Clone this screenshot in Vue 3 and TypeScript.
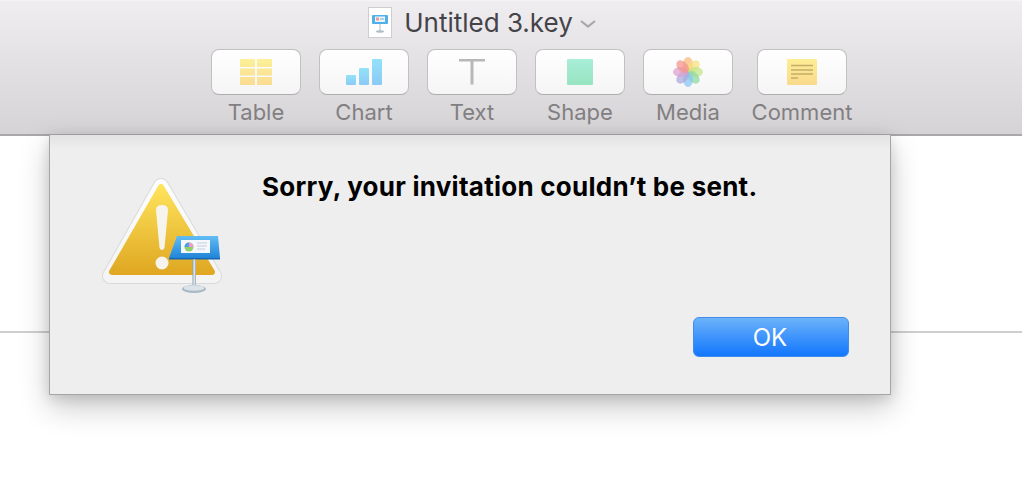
<script setup lang="ts">
const tools: string[] = ['Table', 'Chart', 'Text', 'Shape', 'Media', 'Comment']
const petals: { a: number; c: string }[] = [
  { a: 0, c: '#f9b87c' },
  { a: 45, c: '#f8e07a' },
  { a: 90, c: '#c2e585' },
  { a: 135, c: '#8cd9a0' },
  { a: 180, c: '#88c6f2' },
  { a: 225, c: '#aca7de' },
  { a: 270, c: '#dd9fd0' },
  { a: 315, c: '#f4918a' },
]
</script>

<template>
  <div class="window">
    <header class="toolbar">
      <div class="title-row">
        <span class="doc-thumb">
          <svg width="20" height="24" viewBox="0 0 20 24">
            <rect x="2" y="4" width="16" height="9" rx="1" fill="#4fb0ea" />
            <rect x="5" y="5.500" width="10" height="5.500" fill="#eef4fb" />
            <rect x="6" y="6.500" width="3" height="3" fill="#ef9a8c" />
            <rect x="10" y="7" width="4" height="2" fill="#b9cfe6" />
            <rect x="9.500" y="13" width="1" height="7" fill="#aebcc6" />
            <ellipse cx="10" cy="20.500" rx="4" ry="1.200" fill="#aebcc6" />
          </svg>
        </span>
        <span class="doc-name">Untitled 3.key</span>
        <svg class="chevron" width="16" height="8" viewBox="0 0 16 8">
          <path d="M1 1 L8 6.500 L15 1" fill="none" stroke="#a9a7a9" stroke-width="2.200" />
        </svg>
      </div>
      <div class="tools">
        <div v-for="tool in tools" :key="tool" class="tool">
          <div class="tool-btn">
            <svg v-if="tool === 'Table'" width="32" height="26" viewBox="0 0 32 26">
              <defs>
                <linearGradient id="tb" x1="0" y1="0" x2="0" y2="1">
                  <stop offset="0" stop-color="#fdf098" />
                  <stop offset="1" stop-color="#f9dc92" />
                </linearGradient>
              </defs>
              <path d="M0 0H15V8H0ZM17 0H32V8H17ZM0 9.500H15V16.500H0ZM17 9.500H32V16.500H17ZM0 18H15V26H0ZM17 18H32V26H17Z" fill="url(#tb)" />
            </svg>
            <svg v-else-if="tool === 'Chart'" width="36" height="26" viewBox="0 0 36 26">
              <defs>
                <linearGradient id="cb" x1="0" y1="0" x2="0" y2="1">
                  <stop offset="0" stop-color="#93e2f8" />
                  <stop offset="1" stop-color="#8bc9f6" />
                </linearGradient>
              </defs>
              <rect x="0" y="16" width="10" height="10" rx="1" fill="url(#cb)" />
              <rect x="13" y="9" width="10" height="17" rx="1" fill="url(#cb)" />
              <rect x="26" y="0" width="10" height="26" rx="1" fill="url(#cb)" />
            </svg>
            <svg v-else-if="tool === 'Text'" width="26" height="26" viewBox="0 0 26 26">
              <path d="M0 0H26V2.500H14.500V25.500H11.500V2.500H0Z" fill="#b9b8b9" />
            </svg>
            <span v-else-if="tool === 'Shape'" class="shape-square"></span>
            <svg v-else-if="tool === 'Media'" width="30" height="30" viewBox="-15 -15 30 30">
              <g v-for="p in petals" :key="p.a" :transform="`rotate(${p.a})`">
                <ellipse cx="0" cy="-7.500" rx="5" ry="7.500" :fill="p.c" fill-opacity="0.72" />
              </g>
            </svg>
            <svg v-else width="30" height="26" viewBox="0 0 30 26">
              <defs>
                <linearGradient id="nb" x1="0" y1="0" x2="0" y2="1">
                  <stop offset="0" stop-color="#fdee94" />
                  <stop offset="1" stop-color="#f9da8c" />
                </linearGradient>
              </defs>
              <rect width="30" height="26" rx="1" fill="url(#nb)" />
              <path d="M4 6.500H26M4 11H26M4 15H26M4 19H11" stroke="#c4ad6a" stroke-width="1.500" />
            </svg>
          </div>
          <span class="tool-label">{{ tool }}</span>
        </div>
      </div>
    </header>

    <main class="canvas">
      <div class="slide-rule"></div>
    </main>

    <section class="sheet">
      <div class="alert-icon">
        <svg width="124" height="120" viewBox="0 0 124 120">
          <defs>
            <linearGradient id="warn" x1="0" y1="0" x2="0" y2="1">
              <stop offset="0" stop-color="#fee35b" />
              <stop offset="1" stop-color="#e0a823" />
            </linearGradient>
            <linearGradient id="rim" x1="0" y1="0" x2="0" y2="1">
              <stop offset="0" stop-color="#fdfdfd" />
              <stop offset="1" stop-color="#f4f4f4" />
            </linearGradient>
            <linearGradient id="board" x1="0" y1="0" x2="0" y2="1">
              <stop offset="0" stop-color="#62bdf3" />
              <stop offset="1" stop-color="#2184d8" />
            </linearGradient>
            <linearGradient id="stem" x1="0" y1="0" x2="1" y2="0">
              <stop offset="0" stop-color="#8fa3b3" />
              <stop offset="0.5" stop-color="#e4ebef" />
              <stop offset="1" stop-color="#8fa3b3" />
            </linearGradient>
          </defs>
          <polygon points="59,12 8,102 112,102" fill="#dadada" stroke="#dadada" stroke-width="16" stroke-linejoin="round" />
          <polygon points="59,12 8,102 112,102" fill="url(#rim)" stroke="url(#rim)" stroke-width="14" stroke-linejoin="round" />
          <polygon points="59,13 10,98 110,98" fill="url(#warn)" stroke="url(#warn)" stroke-width="6" stroke-linejoin="round" />
          <path d="M54 36 Q54 31 60 31 Q66 31 66 36 L62.500 74 Q60 78 57.500 74Z" fill="#f6f4ec" />
          <circle cx="60" cy="89" r="6.500" fill="#f6f4ec" />
          <path d="M75 62 H116 L118 84 H67Z" fill="url(#board)" />
          <path d="M67 84 H118 L118 85.500 H67Z" fill="#1668b4" />
          <rect x="79" y="66" width="29" height="13" fill="#f4f7fb" />
          <circle cx="87" cy="73" r="4.500" fill="#8fd06a" />
          <path d="M87 73 L87 68.500 A4.500 4.500 0 0 1 91.500 73Z" fill="#f59ac8" />
          <path d="M87 73 L82.500 73 A4.500 4.500 0 0 1 87 68.500Z" fill="#4d9fe6" />
          <path d="M95 69H105M95 72H105M95 75H103" stroke="#c5ccd6" stroke-width="1" />
          <rect x="90.500" y="85.500" width="3.500" height="28" fill="url(#stem)" />
          <ellipse cx="92" cy="115" rx="12" ry="4" fill="#a9b9c4" />
          <ellipse cx="92" cy="114" rx="10.500" ry="2.700" fill="#dbe3e8" />
        </svg>
      </div>
      <div class="alert-body">
        <h1 class="alert-title">Sorry, your invitation couldn’t be sent.</h1>
        <div class="alert-actions">
          <button class="ok" type="button">OK</button>
        </div>
      </div>
    </section>
  </div>
</template>

<style scoped>
.window {
  position: relative;
  width: 1022px;
  height: 482px;
  overflow: hidden;
  background: #fff;
  font-family: Inter, "Liberation Sans", Arial, sans-serif;
}
.toolbar {
  box-sizing: border-box;
  height: 136px;
  padding-top: 6px;
  background: linear-gradient(#efedef, #d5d3d5);
  border-top: 1px solid #f5f4f5;
  border-bottom: 2px solid #a9a8a9;
}
.title-row {
  display: flex;
  align-items: center;
  justify-content: center;
  height: 31px;
  padding-right: 58px;
}
.doc-thumb {
  display: flex;
  width: 24px;
  height: 31px;
  align-items: center;
  justify-content: center;
  background: #fff;
  box-shadow: inset 0 0 0 1px #cfcecf;
}
.doc-name {
  margin-left: 12px;
  font-size: 26px;
  color: #45434a;
}
.chevron {
  margin-left: 7px;
  margin-top: 2px;
}
.tools {
  display: flex;
  gap: 18px;
  margin-top: 11px;
  padding-left: 211px;
}
.tool {
  display: flex;
  flex-direction: column;
  align-items: center;
}
.tool:last-child {
  width: 102px;
}
.tool-btn {
  display: flex;
  align-items: center;
  justify-content: center;
  box-sizing: border-box;
  width: 90px;
  height: 46px;
  border-radius: 8px;
  border: 1px solid #c2c1c2;
  border-bottom-color: #b0afb0;
  background: linear-gradient(#ffffff, #f5f5f5);
}
.shape-square {
  display: block;
  width: 26px;
  height: 26px;
  border-radius: 1px;
  background: linear-gradient(#a9eed9, #97e4c0);
}
.tool-label {
  margin-top: 4px;
  font-size: 22px;
  line-height: 27px;
  color: #827f82;
}
.canvas {
  height: 346px;
}
.slide-rule {
  margin-top: 195px;
  height: 2px;
  background: #cfcfcf;
}
.sheet {
  position: absolute;
  left: 49px;
  top: 135px;
  box-sizing: border-box;
  display: flex;
  width: 842px;
  height: 260px;
  padding: 1px 41px 37px 52px;
  background: linear-gradient(#e3e3e3, #eeeeee 14px);
  border: 1px solid #a5a5a5;
  border-top: 0;
  box-shadow: 0 12px 28px rgba(0, 0, 0, 0.22), 0 3px 12px rgba(0, 0, 0, 0.12);
}
.alert-icon {
  flex: none;
  width: 124px;
  margin-top: 38px;
}
.alert-body {
  flex: 1;
  display: flex;
  flex-direction: column;
  justify-content: space-between;
  padding-left: 36px;
}
.alert-title {
  margin: 36px 0 0;
  font-size: 26px;
  line-height: 30px;
  font-weight: 700;
  letter-spacing: 0.25px;
  color: #000;
}
.alert-actions {
  display: flex;
  justify-content: flex-end;
}
.ok {
  width: 156px;
  height: 40px;
  padding: 0 2px 0 0;
  border: 1px solid #3f8de8;
  border-radius: 6px;
  background: linear-gradient(#6cb2fa, #1276fd);
  color: #fff;
  font-family: inherit;
  font-size: 24px;
}
</style>
